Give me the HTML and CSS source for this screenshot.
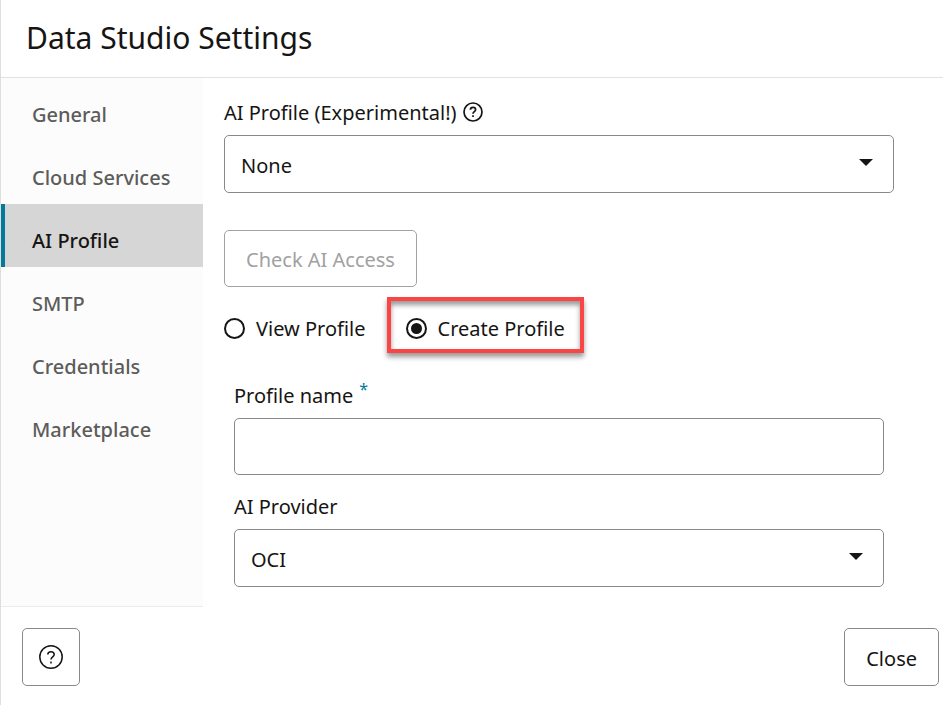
FILE: index.html
```html
<!DOCTYPE html>
<html lang="en">
<head>
<meta charset="utf-8">
<title>Data Studio Settings</title>
<link rel="stylesheet" href="styles.css">
</head>
<body>
<div class="dialog">
  <header class="header"><h1>Data Studio Settings</h1></header>
  <div class="body">
    <nav class="sidebar">
      <a href="#general">General</a>
      <a href="#cloud">Cloud Services</a>
      <a href="#ai" class="active" aria-current="page">AI Profile</a>
      <a href="#smtp">SMTP</a>
      <a href="#credentials">Credentials</a>
      <a href="#marketplace">Marketplace</a>
    </nav>
    <main class="content">
      <div class="label-row">
        <label for="ai-profile">AI Profile (Experimental!)</label>
        <svg class="help" viewBox="0 0 20 20" aria-hidden="true"><circle cx="10" cy="10" r="9"/><path d="M7.4 7.8C7.4 6.3 8.5 5.4 10 5.4s2.6.9 2.6 2.3c0 1.9-2.6 1.9-2.6 4"/><path d="M10 13.2v1.8"/></svg>
      </div>
      <div class="select">
        <select id="ai-profile"><option>None</option></select>
        <svg class="caret" viewBox="0 0 14 7" aria-hidden="true"><path d="M0 0h14L7 7z"/></svg>
      </div>
      <button type="button" class="button check" disabled>Check AI Access</button>
      <div class="modes">
        <label class="radio"><input type="radio" name="mode">View Profile</label>
        <label class="radio marked"><input type="radio" name="mode" checked>Create Profile</label>
      </div>
      <div class="form">
        <div class="label-row">
          <label for="profile-name">Profile name</label><span class="required">*</span>
        </div>
        <input type="text" class="text" id="profile-name" required>
        <div class="label-row provider">
          <label for="provider">AI Provider</label>
        </div>
        <div class="select">
          <select id="provider"><option>OCI</option></select>
          <svg class="caret" viewBox="0 0 14 7" aria-hidden="true"><path d="M0 0h14L7 7z"/></svg>
        </div>
      </div>
    </main>
  </div>
  <footer class="footer">
    <button type="button" class="button icon" aria-label="Help">
      <svg class="help large" viewBox="0 0 24 24" aria-hidden="true"><circle cx="12" cy="12" r="11.2"/><path d="M8.8 9.6C8.8 7.7 10.1 6.7 12 6.7s3.2 1.1 3.2 2.8c0 2.4-3.2 2.3-3.2 5.1"/><path d="M12 16.4v2"/></svg>
    </button>
    <button type="button" class="button">Close</button>
  </footer>
</div>
</body>
</html>
```
FILE: styles.css
```css
* {
  box-sizing: border-box;
}

body {
  margin: 0;
  background: #fff;
  color: #161513;
  font: 20px/28px "Segoe UI", "Noto Sans", "Open Sans", sans-serif;
}

input,
select,
button {
  font: inherit;
  color: inherit;
}

.dialog {
  display: flex;
  flex-direction: column;
  min-height: 100vh;
  border-left: 1px solid #dedede;
}

.header {
  padding: 16px 25px 17px;
  border-bottom: 1px solid #e2e2e2;
}

h1 {
  margin: 0;
  font-size: 30px;
  font-weight: 400;
  line-height: 44px;
}

.body {
  display: flex;
}

.sidebar {
  flex: none;
  width: 202px;
  background: #fcfcfc;
  border-bottom: 1px solid #ebebeb;
}

.sidebar a {
  display: block;
  height: 63px;
  padding: 23px 0 0 27px;
  border-left: 4px solid transparent;
  color: #5d5c5b;
  font-weight: 500;
  text-decoration: none;
}

.sidebar .active {
  border-left-color: #04799c;
  background: #d6d6d6;
  color: #161513;
}

.content {
  flex: 1;
  padding: 21px 49px 20px 21px;
}

.label-row {
  display: flex;
  align-items: center;
  gap: 6px;
  margin-bottom: 8px;
}

.help {
  width: 20px;
  height: 20px;
  margin-bottom: 2px;
  fill: none;
  stroke: #161513;
  stroke-width: 1.7;
}

.help.large {
  display: block;
  width: 24px;
  height: 24px;
  margin: 0;
  stroke-width: 1.5;
}

.select {
  position: relative;
}

.select select,
.text {
  display: block;
  width: 100%;
  height: 58px;
  margin: 0;
  padding: 4px 16px 0;
  border: 1px solid #8a8988;
  border-radius: 5px;
  background: #fff;
  appearance: none;
}

.text {
  height: 57px;
}

.caret {
  position: absolute;
  top: 24px;
  right: 21px;
  width: 14px;
  height: 7px;
  fill: #161513;
  pointer-events: none;
}

.button {
  height: 58px;
  padding: 3px 21px 0;
  border: 1px solid #8a8988;
  border-radius: 5px;
  background: #fff;
}

.button:disabled {
  border-color: #a3a2a2;
  color: #a2a1a1;
}

.check {
  height: 57px;
  margin-top: 37px;
}

.icon {
  width: 58px;
  padding: 0 16px;
}

.modes {
  display: flex;
  gap: 21px;
  margin-top: 10px;
}

.radio {
  display: flex;
  align-items: center;
  gap: 11px;
  height: 56px;
  padding-top: 7px;
}

.radio input {
  display: grid;
  place-items: center;
  width: 21px;
  height: 21px;
  margin: 0;
  border: 2px solid #161513;
  border-radius: 50%;
  appearance: none;
}

.radio input:checked::before {
  content: "";
  width: 11px;
  height: 11px;
  border-radius: 50%;
  background: #161513;
}

.marked {
  padding: 7px 15px 0;
  border: 4px solid #fb4444;
  box-shadow: 0 4px 5px rgba(0, 0, 0, 0.4), inset 0 4px 5px rgba(0, 0, 0, 0.4);
}

.form {
  margin: 29px 10px 0;
}

.required {
  margin-top: -14px;
  color: #04799c;
  font-size: 16px;
  line-height: 24px;
}

.provider {
  margin-top: 18px;
}

.footer {
  display: flex;
  justify-content: space-between;
  padding: 21px 4px 19px 21px;
}
```
